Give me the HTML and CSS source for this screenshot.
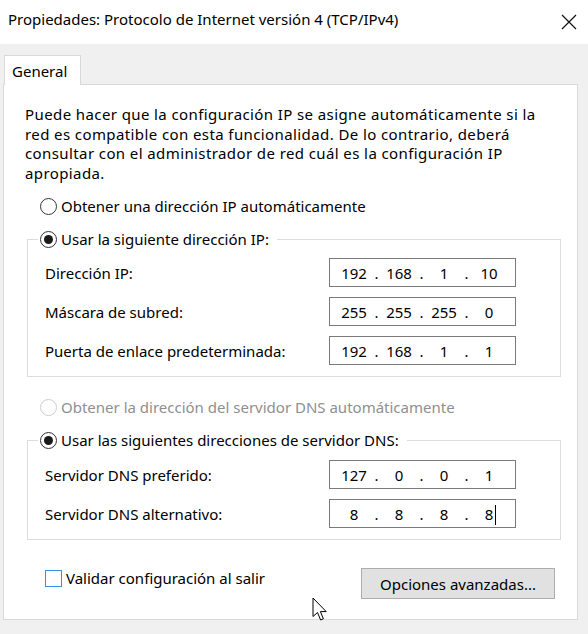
FILE: index.html
```html
<!DOCTYPE html>
<html lang="es">
  <head>
    <meta charset="UTF-8" />
    <meta name="viewport" content="width=device-width, initial-scale=1.0" />
    <title>Propiedades: Protocolo de Internet versión 4 (TCP/IPv4)</title>
    <link rel="stylesheet" href="styles.css">
  </head>
  <body>
    <div class="window">
      <div class="titlebar">
        <span class="title">Propiedades: Protocolo de Internet versión 4 (TCP/IPv4)</span>
        <button class="close" aria-label="Cerrar">
          <svg width="16" height="16" viewBox="0 0 16 16">
            <path d="M1 1 L15 15 M15 1 L1 15" stroke="#111" stroke-width="1.2" fill="none" />
          </svg>
        </button>
      </div>

      <div class="tabs">
        <div class="tab">General</div>
      </div>

      <div class="panel">
        <p class="intro">
          Puede hacer que la configuración IP se asigne automáticamente si la<br>
          red es compatible con esta funcionalidad. De lo contrario, deberá<br>
          consultar con el administrador de red cuál es la configuración IP<br>
          apropiada.
        </p>

        <label class="option">
          <input type="radio" name="ip" />
          <span>Obtener una dirección IP automáticamente</span>
        </label>

        <fieldset class="group">
          <legend>
            <label class="option">
              <input type="radio" name="ip" checked />
              <span>Usar la siguiente dirección IP:</span>
            </label>
          </legend>
          <div class="fields">
            <span>Dirección IP:</span>
            <div class="ip">
              <span class="oct">192</span><span class="dot">.</span><span class="oct">168</span><span class="dot">.</span><span class="oct">1</span><span class="dot">.</span><span class="oct">10</span>
            </div>
            <span>Máscara de subred:</span>
            <div class="ip">
              <span class="oct">255</span><span class="dot">.</span><span class="oct">255</span><span class="dot">.</span><span class="oct">255</span><span class="dot">.</span><span class="oct">0</span>
            </div>
            <span>Puerta de enlace predeterminada:</span>
            <div class="ip">
              <span class="oct">192</span><span class="dot">.</span><span class="oct">168</span><span class="dot">.</span><span class="oct">1</span><span class="dot">.</span><span class="oct">1</span>
            </div>
          </div>
        </fieldset>

        <label class="option option-dns disabled">
          <input type="radio" name="dns" disabled />
          <span>Obtener la dirección del servidor DNS automáticamente</span>
        </label>

        <fieldset class="group group-dns">
          <legend>
            <label class="option">
              <input type="radio" name="dns" checked />
              <span>Usar las siguientes direcciones de servidor DNS:</span>
            </label>
          </legend>
          <div class="fields">
            <span>Servidor DNS preferido:</span>
            <div class="ip">
              <span class="oct">127</span><span class="dot">.</span><span class="oct">0</span><span class="dot">.</span><span class="oct">0</span><span class="dot">.</span><span class="oct">1</span>
            </div>
            <span>Servidor DNS alternativo:</span>
            <div class="ip">
              <span class="oct">8</span><span class="dot">.</span><span class="oct">8</span><span class="dot">.</span><span class="oct">8</span><span class="dot">.</span><span class="oct caret">8</span>
            </div>
          </div>
        </fieldset>

        <div class="bottom">
          <label class="option check">
            <input type="checkbox" />
            <span>Validar configuración al salir</span>
          </label>
          <button class="advanced">Opciones avanzadas...</button>
        </div>
      </div>

      <svg class="pointer" width="16" height="26" viewBox="0 0 16 26">
        <path d="M1 1 L1 19.5 L5.5 15.5 L8.6 23 L11.4 21.8 L8.4 14.6 L14.2 14.6 Z" fill="#fff" stroke="#000" stroke-width="1" stroke-linejoin="miter" />
      </svg>
    </div>
  </body>
</html>
```

FILE: styles.css
```css
body {
  margin: 0;
  background-color: #f0f0f0;
  font-family: "Noto Sans", sans-serif;
  font-size: 15px;
  color: #000;
}
.window {
  position: relative;
  width: 588px;
  height: 634px;
  background-color: #f0f0f0;
}
.titlebar {
  height: 44px;
  background-color: #fff;
  display: flex;
  align-items: center;
  justify-content: space-between;
  padding-left: 8px;
}
.title {
  margin-top: -7px;
}
.close {
  width: 46px;
  height: 44px;
  border: none;
  background: none;
  padding: 0;
  display: flex;
  align-items: center;
  justify-content: center;
  margin-right: -4px;
}
.tabs {
  padding: 11px 0 0 4px;
  display: flex;
}
.tab {
  width: 77px;
  height: 30px;
  box-sizing: border-box;
  background-color: #fff;
  border: 1px solid #d9d9d9;
  border-bottom: none;
  margin-bottom: -1px;
  padding-left: 7px;
  line-height: 31px;
  position: relative;
  z-index: 1;
}
.panel {
  margin-left: 3px;
  width: 575px;
  height: 536px;
  box-sizing: border-box;
  background-color: #fff;
  border: 1px solid #d9d9d9;
  padding: 20px 16px 20px 21px;
}
.intro {
  margin: 0;
  line-height: 19.5px;
  letter-spacing: 0.4px;
}
.option {
  display: flex;
  align-items: center;
  gap: 4px;
  height: 20px;
}
.panel > .option {
  margin: 13px 0 0 15px;
}
.panel > .option-dns {
  margin-top: 20px;
}
.option input[type="radio"] {
  appearance: none;
  margin: 0;
  width: 17px;
  height: 17px;
  border: 1px solid #333;
  border-radius: 50%;
  display: flex;
  align-items: center;
  justify-content: center;
  background-color: #fff;
}
.option input[type="radio"]:checked::after {
  content: "";
  width: 9px;
  height: 9px;
  border-radius: 50%;
  background-color: #1a1a1a;
}
.option.disabled {
  color: #8f8f8f;
}
.option.disabled input[type="radio"] {
  border-color: #cccccc;
}
.group {
  margin: 13px 0 0 2px;
  padding: 9px 0 11px 17px;
  border: 1px solid #dcdcdc;
  min-width: 0;
}
.group legend {
  margin-left: -7px;
  padding: 0 8px 0 2px;
}
.group-dns {
  padding-top: 10px;
}
.fields {
  display: grid;
  grid-template-columns: 284px 187px;
  row-gap: 10px;
  align-items: center;
}
.ip {
  height: 29px;
  box-sizing: border-box;
  border: 1px solid #7a7a7a;
  display: flex;
  align-items: center;
  padding: 0 6px;
}
.ip .oct {
  width: 36px;
  text-align: center;
}
.ip .dot {
  width: 9px;
  text-align: center;
}
.ip .caret {
  position: relative;
}
.ip .caret::after {
  content: "";
  position: absolute;
  left: 24px;
  top: 1px;
  width: 1px;
  height: 20px;
  background-color: #000;
}
.bottom {
  margin: 28px 6px 0 0;
  display: flex;
  align-items: flex-start;
  justify-content: space-between;
  padding-left: 20px;
}
.check {
  gap: 4px;
}
.check input[type="checkbox"] {
  appearance: none;
  margin: 0;
  width: 17px;
  height: 17px;
  border: 1px solid #3a8ee6;
  background-color: #fff;
}
.advanced {
  width: 194px;
  height: 31px;
  font-family: inherit;
  font-size: 15px;
  color: #000;
  background-color: #e1e1e1;
  border: 1px solid #adadad;
  padding: 0;
}
.pointer {
  position: absolute;
  left: 312px;
  top: 597px;
}
```
